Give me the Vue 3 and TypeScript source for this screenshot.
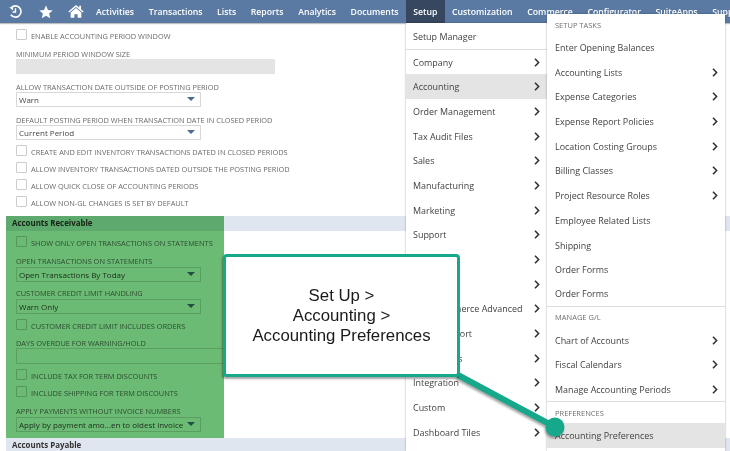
<script setup lang="ts">
interface MenuRow { label: string; arrow?: boolean; head?: boolean; sep?: boolean; on?: boolean }

const navItems = ['Activities', 'Transactions', 'Lists', 'Reports', 'Analytics', 'Documents', 'Setup', 'Customization', 'Commerce', 'Configurator', 'SuiteApps', 'Support']

const setupMenu: MenuRow[] = [
  { label: 'Setup Manager', sep: true },
  { label: 'Company', arrow: true },
  { label: 'Accounting', arrow: true, on: true },
  { label: 'Order Management', arrow: true },
  { label: 'Tax Audit Files', arrow: true },
  { label: 'Sales', arrow: true },
  { label: 'Manufacturing', arrow: true },
  { label: 'Marketing', arrow: true },
  { label: 'Support', arrow: true },
  { label: '', arrow: true },
  { label: '', arrow: true },
  { label: 'SuiteCommerce Advanced', arrow: true },
  { label: 'Import/Export', arrow: true },
  { label: 'Users/Roles', arrow: true },
  { label: 'Integration', arrow: true },
  { label: 'Custom', arrow: true },
  { label: 'Dashboard Tiles', arrow: true },
]

const taskMenu: MenuRow[] = [
  { label: 'SETUP TASKS', head: true },
  { label: 'Enter Opening Balances' },
  { label: 'Accounting Lists', arrow: true },
  { label: 'Expense Categories', arrow: true },
  { label: 'Expense Report Policies', arrow: true },
  { label: 'Location Costing Groups', arrow: true },
  { label: 'Billing Classes', arrow: true },
  { label: 'Project Resource Roles', arrow: true },
  { label: 'Employee Related Lists' },
  { label: 'Shipping' },
  { label: 'Order Forms' },
  { label: 'Order Forms', sep: true },
  { label: 'MANAGE G/L', head: true },
  { label: 'Chart of Accounts', arrow: true },
  { label: 'Fiscal Calendars', arrow: true },
  { label: 'Manage Accounting Periods', arrow: true, sep: true },
  { label: 'PREFERENCES', head: true },
  { label: 'Accounting Preferences', on: true },
]
</script>

<template>
  <div class="page">
    <nav class="nav">
      <div class="icons">
        <svg width="15" height="15" viewBox="0 0 16 16" fill="none" stroke="#fff" stroke-width="1.7">
          <path d="M3 11.5A6 6 0 1 0 3.4 4" />
          <path d="M1.2 3.4h4.2v3.400z" fill="#fff" stroke="none" />
          <path d="M8 4.600v4h-3" stroke-width="1.500" />
        </svg>
        <svg width="14" height="14" viewBox="0 0 24 24" fill="#fff">
          <path d="M12 1l3.300 7.600 8.200.7-6.200 5.400 1.900 8.100L12 18.500l-7.200 4.300 1.900-8.100L.5 9.300l8.200-.7z" />
        </svg>
        <svg width="16" height="15" viewBox="0 0 18 16" fill="#fff">
          <path d="M9 .8L.4 8l1 1.200L9 2.900l7.600 6.300 1-1.200-3-2.500V1.500h-2v2.200z" />
          <path d="M9 4.200L3 9.200V15h4.200v-3.800h3.600V15H15V9.200z" />
        </svg>
      </div>
      <a v-for="item in navItems" :key="item" class="nav-item" :class="{ active: item === 'Setup' }">{{ item }}</a>
    </nav>

    <main class="form">
      <div class="pad">
        <label class="check first"><i></i>ENABLE ACCOUNTING PERIOD WINDOW</label>
        <div class="label gap-a">MINIMUM PERIOD WINDOW SIZE</div>
        <div class="disabled"></div>
        <div class="label gap-b">ALLOW TRANSACTION DATE OUTSIDE OF POSTING PERIOD</div>
        <div class="select">Warn<b></b></div>
        <div class="label gap-b">DEFAULT POSTING PERIOD WHEN TRANSACTION DATE IN CLOSED PERIOD</div>
        <div class="select">Current Period<b></b></div>
        <label class="check"><i></i>CREATE AND EDIT INVENTORY TRANSACTIONS DATED IN CLOSED PERIODS</label>
        <label class="check"><i></i>ALLOW INVENTORY TRANSACTIONS DATED OUTSIDE THE POSTING PERIOD</label>
        <label class="check"><i></i>ALLOW QUICK CLOSE OF ACCOUNTING PERIODS</label>
        <label class="check"><i></i>ALLOW NON-GL CHANGES IS SET BY DEFAULT</label>
      </div>
      <h3 class="band">Accounts Receivable</h3>
      <div class="pad receivable">
        <label class="check first-b"><i></i>SHOW ONLY OPEN TRANSACTIONS ON STATEMENTS</label>
        <div class="label gap-c">OPEN TRANSACTIONS ON STATEMENTS</div>
        <div class="select">Open Transactions By Today<b></b></div>
        <div class="label gap-d">CUSTOMER CREDIT LIMIT HANDLING</div>
        <div class="select">Warn Only<b></b></div>
        <label class="check"><i></i>CUSTOMER CREDIT LIMIT INCLUDES ORDERS</label>
        <div class="label gap-e">DAYS OVERDUE FOR WARNING/HOLD</div>
        <div class="text-input"></div>
        <label class="check"><i></i>INCLUDE TAX FOR TERM DISCOUNTS</label>
        <label class="check"><i></i>INCLUDE SHIPPING FOR TERM DISCOUNTS</label>
        <div class="label gap-c">APPLY PAYMENTS WITHOUT INVOICE NUMBERS</div>
        <div class="select">Apply by payment amo...en to oldest invoice<b></b></div>
      </div>
      <h3 class="band payable">Accounts Payable</h3>
    </main>

    <div class="highlight"></div>

    <ul class="menu setup">
      <li v-for="(row, i) in setupMenu" :key="i" :class="{ on: row.on, sep: row.sep }">
        <span>{{ row.label }}</span>
        <svg v-if="row.arrow" width="6" height="9" viewBox="0 0 6 9" fill="none" stroke="#333" stroke-width="1.6"><path d="M1 .8l3.600 3.700L1 8.200" /></svg>
      </li>
    </ul>

    <ul class="menu tasks">
      <li v-for="(row, i) in taskMenu" :key="i" :class="{ on: row.on, sep: row.sep, head: row.head }">
        <span>{{ row.label }}</span>
        <svg v-if="row.arrow" width="6" height="9" viewBox="0 0 6 9" fill="none" stroke="#333" stroke-width="1.6"><path d="M1 .8l3.600 3.700L1 8.200" /></svg>
      </li>
    </ul>

    <svg class="pointer" width="730" height="451" viewBox="0 0 730 451">
      <path d="M458 375L555 427" stroke="#15a88a" stroke-width="6" />
      <circle cx="555" cy="427" r="9.500" fill="#15a88a" />
    </svg>

    <div class="callout">Set Up &gt;<br />Accounting &gt;<br />Accounting Preferences</div>
  </div>
</template>

<style>
html, body { margin: 0; background: #fff; }
</style>

<style scoped>
.page {
  position: relative;
  width: 730px;
  height: 451px;
  overflow: hidden;
  background: #fff;
  font-family: "Open Sans", "Noto Sans", sans-serif;
  filter: blur(0.35px);
}
.nav {
  display: flex;
  align-items: stretch;
  height: 23px;
  background: #5b7aa3;
  box-shadow: 0 1px 1px rgba(0, 0, 0, .25);
  white-space: nowrap;
}
.icons {
  display: flex;
  align-items: center;
  gap: 15.500px;
  width: 88.670px;
  padding-left: 8px;
  box-sizing: border-box;
  flex: none;
}
.nav-item {
  flex: none;
  display: flex;
  align-items: center;
  padding: 0 7.330px;
  color: #fff;
  font-size: 8.700px;
  font-weight: 600;
}
.nav-item.active { background: #36475f; }
.form { display: flex; flex-direction: column; }
.pad {
  display: flex;
  flex-direction: column;
  padding: 0 16px;
}
.check {
  display: flex;
  align-items: center;
  height: 17px;
  font-size: 7.420px;
  color: #6a6a6a;
  white-space: nowrap;
}
.check i {
  flex: none;
  width: 9px;
  height: 9px;
  margin: 0 4px 3px 0;
  border: 1px solid #ccc;
  border-radius: 1px;
  background: #fff;
}
.check.first { margin-top: 4.500px; }
.check.first-b { margin-top: 3.500px; }
.select + .check, .text-input + .check { margin-top: 3.500px; }
.label {
  height: 10px;
  line-height: 10px;
  font-size: 7.420px;
  color: #6a6a6a;
  white-space: nowrap;
}
.gap-a { margin-top: 4.500px; }
.gap-b { margin-top: 8px; }
.gap-c { margin-top: 4.500px; }
.gap-d { margin-top: 6px; }
.gap-e { margin-top: 3.500px; }
.disabled {
  width: 259px;
  height: 15px;
  background: #e4e4e4;
}
.select {
  position: relative;
  box-sizing: border-box;
  width: 185px;
  height: 15px;
  line-height: 13px;
  padding-left: 2px;
  border: 1px solid #d8d8d8;
  font-size: 8px;
  color: #444;
  background: #fff;
  white-space: nowrap;
}
.receivable .select { margin-top: 1px; }
.select b {
  position: absolute;
  right: 5px;
  top: 4px;
  border-left: 4px solid transparent;
  border-right: 4px solid transparent;
  border-top: 4px solid #4d6a94;
}
.text-input {
  box-sizing: border-box;
  width: 300px;
  height: 16px;
  border: 1px solid #d8d8d8;
}
.band {
  height: 15px;
  line-height: 15px;
  margin: 4.500px 0 0 6px;
  padding: 0 6px;
  font-size: 7.900px;
  font-weight: 700;
  color: #333;
  background: #e0e6ef;
}
.band.payable { margin-top: 6px; }
.highlight {
  position: absolute;
  left: 6px;
  top: 216px;
  width: 218px;
  height: 222px;
  background: #6bbb74;
  mix-blend-mode: multiply;
}
.menu {
  position: absolute;
  margin: 0;
  list-style: none;
  background: #fff;
  box-shadow: 0 0 2px rgba(0, 0, 0, .35);
  font-size: 8.950px;
  color: #3f3f3f;
  box-sizing: border-box;
}
.menu li {
  display: flex;
  align-items: center;
  justify-content: space-between;
  box-sizing: border-box;
  height: 24.700px;
  padding: 0 7px;
  white-space: nowrap;
}
.menu li.on { background: #e4e4e4; }
.menu li.sep { border-bottom: 1px solid #ddd; }
.setup { left: 406px; top: 23px; width: 141px; height: 428px; padding: 2px 0 0; }
.tasks { left: 547px; top: 14px; width: 178px; height: 437px; padding: 0; }
.tasks li { padding: 0 7px 0 8px; }
.tasks li.head {
  height: 21.200px;
  font-size: 7.500px;
  color: #6f6f6f;
}
.pointer {
  position: absolute;
  left: 0;
  top: 0;
  filter: drop-shadow(-1px 2px 1px rgba(0, 0, 0, .35));
}
.callout {
  position: absolute;
  left: 223px;
  top: 254px;
  width: 237px;
  height: 123px;
  box-sizing: border-box;
  display: flex;
  align-items: center;
  justify-content: center;
  text-align: center;
  border: 3.500px solid #15a88a;
  border-radius: 4px;
  background: #fff;
  box-shadow: -1px 2px 2px rgba(0, 0, 0, .35);
  font-family: "Liberation Sans", Arial, sans-serif;
  font-size: 16.800px;
  line-height: 20px;
  color: #1a1a1a;
}
</style>
